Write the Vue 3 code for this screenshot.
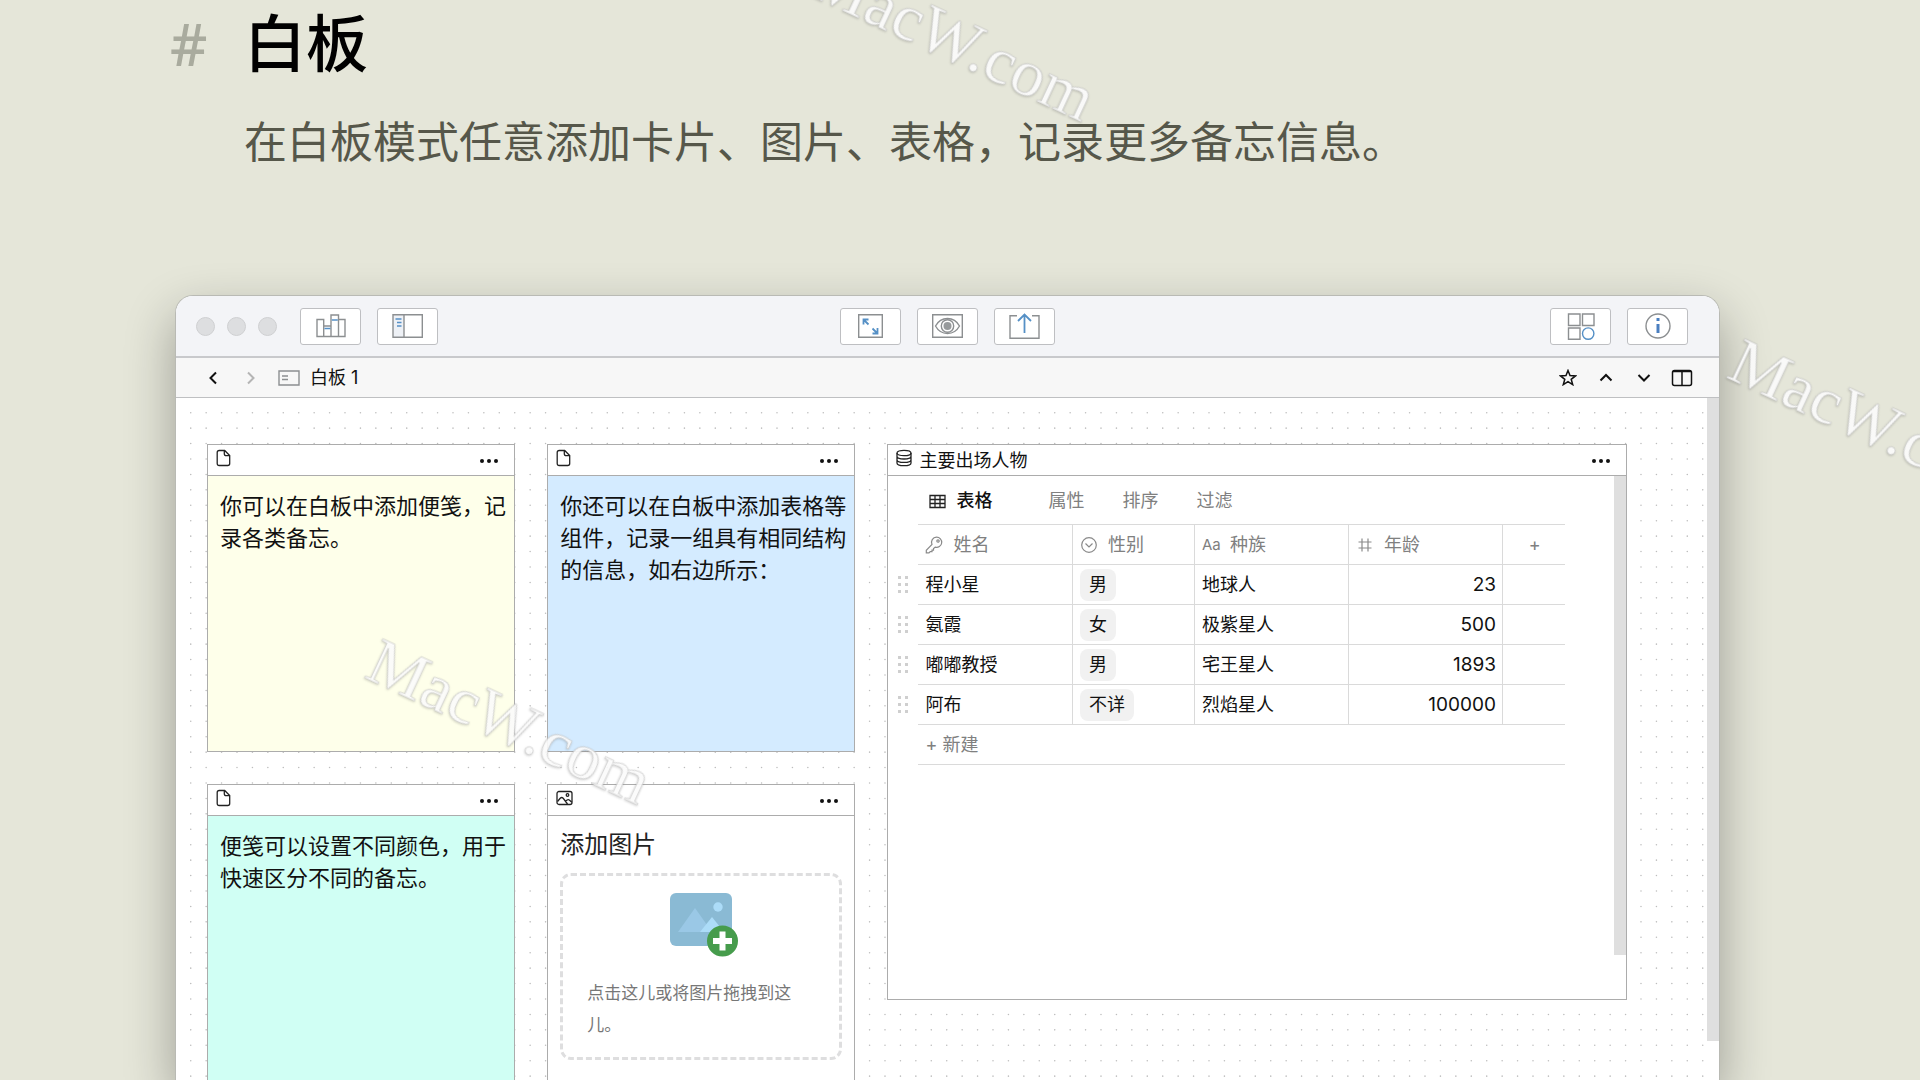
<script setup>
const notes = [
  { id: 'yellow', lines: '你可以在白板中添加便笺，记录各类备忘。' },
  { id: 'blue', lines: '你还可以在白板中添加表格等组件，记录一组具有相同结构的信息，如右边所示：' },
  { id: 'mint', lines: '便笺可以设置不同颜色，用于快速区分不同的备忘。' },
]

const rows = [
  { name: '程小星', gender: '男', race: '地球人', age: 23 },
  { name: '氨霞', gender: '女', race: '极紫星人', age: 500 },
  { name: '嘟嘟教授', gender: '男', race: '宅王星人', age: 1893 },
  { name: '阿布', gender: '不详', race: '烈焰星人', age: 100000 },
]

const watermarks = [
  { x: 807, y: -6 },
  { x: 363, y: 677 },
  { x: 1725, y: 377 },
]

const gridDots = Array.from({ length: 49 }, (_, i) => ({
  x: (i % 7) * 10 + 5,
  y: Math.floor(i / 7) * 10 + 5,
}))
</script>

<template>
  <main class="page">
    <header class="intro">
      <span class="hash" aria-hidden="true">#</span>
      <div>
        <h1>白板</h1>
        <p>在白板模式任意添加卡片、图片、表格，记录更多备忘信息。</p>
      </div>
    </header>

    <section class="window" aria-label="白板 1">
      <div class="toolbar">
        <div class="group">
          <span class="lights"><i></i><i></i><i></i></span>
          <button class="tool" aria-label="书架">
            <svg width="30" height="24" viewBox="0 0 30 24">
              <path class="g" d="M1 5.5h6.7v17H1zM7.700 12h7.300v10.500H7.700zM15 1h7.500v21.500H15zM22.500 5.500h6.500v17h-6.500z" />
              <path class="b" d="M8.500 14.500h6M15.800 6h6" />
            </svg>
          </button>
          <button class="tool" aria-label="侧栏">
            <svg width="31" height="24" viewBox="0 0 31 24">
              <path d="M1 1h11v22H1z" fill="#eef1f6" />
              <path class="g" d="M1 .7h29.300v22.600H1zM12 1v22" />
              <path class="b" d="M3.500 5h6M5 8.500h4.500M5 12h4.500" />
            </svg>
          </button>
        </div>
        <div class="group">
          <button class="tool" aria-label="全屏">
            <svg width="25" height="24" viewBox="0 0 25 24">
              <path class="g" d="M.7.700h23.600v22.600H.7z" />
              <path class="b thick" d="M5.500 10.500V5.500h5M6 6l4.500 4.500M19.500 14v5.500h-5M19 19l-4.500-4.500" />
            </svg>
          </button>
          <button class="tool" aria-label="预览">
            <svg width="31" height="24" viewBox="0 0 31 24">
              <path class="g" d="M.7.700h29.600v22.600H.7z" />
              <path class="g" d="M3.500 12C9 2 22 2 27.500 12 22 22 9 22 3.500 12z" />
              <circle class="g" cx="15.500" cy="12" r="6.200" />
              <circle cx="15.500" cy="12" r="4" fill="#979a9c" />
            </svg>
          </button>
          <button class="tool" aria-label="导出">
            <svg width="31" height="26" viewBox="0 0 31 26">
              <path class="g" d="M8 2.700H1v22.600h29V2.700h-7" />
              <path class="b thick" d="M15.500 20V1.500M9 8l6.500-6.500L22 8" />
            </svg>
          </button>
        </div>
        <div class="group end">
          <button class="tool" aria-label="组件">
            <svg width="28" height="27" viewBox="0 0 28 27">
              <path class="g" d="M1.500 1H13v11.500H1.500zM15.500 1H27v11.500H15.500zM1.500 15H13v11.300H1.500z" />
              <circle class="b" cx="21.200" cy="20.600" r="5.700" />
            </svg>
          </button>
          <button class="tool" aria-label="信息">
            <svg width="26" height="26" viewBox="0 0 26 26">
              <circle class="g" cx="13" cy="13" r="12" />
              <path d="M11.500 5h3v3h-3zM11.500 11h3v9h-3z" fill="#4a7fc0" />
            </svg>
          </button>
        </div>
      </div>

      <div class="tabbar">
        <button class="plain" aria-label="后退">
          <svg width="10" height="14" viewBox="0 0 10 14"><path d="M8 1.500L2.500 7 8 12.500" /></svg>
        </button>
        <button class="plain forward" aria-label="前进">
          <svg width="10" height="14" viewBox="0 0 10 14"><path d="M2 1.500L7.500 7 2 12.500" /></svg>
        </button>
        <svg width="22" height="16" viewBox="0 0 22 16">
          <path class="g" d="M1 1h20v14H1zM4 6h6M4 9.500h6" />
        </svg>
        <span class="doc-title">白板 1</span>
        <button class="plain" aria-label="收藏">
          <svg width="18" height="17" viewBox="0 0 18 17">
            <path class="thin" d="M9 1.500l2 5.100 5.500.3-4.300 3.400 1.500 5.300L9 12.600l-4.700 3 1.500-5.300L1.500 6.900 7 6.600z" />
          </svg>
        </button>
        <button class="plain" aria-label="上一个">
          <svg width="14" height="10" viewBox="0 0 14 10"><path d="M1.500 7.500L7 2l5.500 5.500" /></svg>
        </button>
        <button class="plain" aria-label="下一个">
          <svg width="14" height="10" viewBox="0 0 14 10"><path d="M1.500 2L7 7.500 12.500 2" /></svg>
        </button>
        <button class="plain" aria-label="分栏">
          <svg width="22" height="18" viewBox="0 0 22 18">
            <rect class="thin" x="1.500" y="1.500" width="19" height="15" rx="2" />
            <path class="thin" d="M2 2.500h18M11 2v14" />
          </svg>
        </button>
      </div>

      <div class="canvas">
        <div class="board">
          <svg class="dots" aria-hidden="true">
            <pattern id="dots" x="7" y="7" width="108" height="108" patternUnits="userSpaceOnUse" viewBox="0 0 70 70">
              <circle v-for="(d, i) in gridDots" :key="i" :cx="d.x" :cy="d.y" r=".5" />
            </pattern>
            <rect width="100%" height="100%" fill="url(#dots)" />
          </svg>

          <article v-for="note in notes" :key="note.id" class="card" :class="note.id">
            <header class="card-head">
              <svg class="ink" width="15" height="18" viewBox="0 0 15 18">
                <path d="M3.200 1.500h5.500l5 5v8c0 1.300-.7 2-2 2H3.200c-1.300 0-2-.7-2-2v-11c0-1.300.7-2 2-2zM8.300 1.500v3.200c0 1.200.7 1.900 1.900 1.900h3.300" />
              </svg>
              <button class="more" aria-label="更多"><i></i><i></i><i></i></button>
            </header>
            <p class="note">{{ note.lines }}</p>
          </article>

          <article class="card picture">
            <header class="card-head">
              <svg class="ink" width="17" height="18" viewBox="0 0 17 18">
                <rect x="1" y="2.500" width="15" height="13" rx="2" />
                <path d="M1.500 12.500l2.700-3.200c1-1 2-1 3 0L11.500 15M9.500 12.300l1.600-1.300c.8-.5 1.500-.5 2.200 0l2.500 2.300" />
                <circle cx="11.500" cy="6" r="1.300" />
              </svg>
              <button class="more" aria-label="更多"><i></i><i></i><i></i></button>
            </header>
            <h2>添加图片</h2>
            <button class="drop">
              <svg width="62" height="66" viewBox="0 0 62 66" overflow="visible">
                <rect x="0" y="0" width="62" height="53" rx="6" fill="#8abad4" />
                <path d="M8 39l17-24 17 24z" fill="#9ac8e6" />
                <path d="M30 39l12-15 12 15z" fill="#acdcf8" />
                <circle cx="48" cy="14" r="4.700" fill="#acdcf8" />
                <circle cx="52.500" cy="48" r="15.500" fill="#469c4c" />
                <path d="M49.500 38.500h6v6.500H62v6h-6.500v6.500h-6V51H43v-6h6.500z" fill="#fff" />
              </svg>
              <span>点击这儿或将图片拖拽到这儿。</span>
            </button>
          </article>

          <article class="card data">
            <header class="card-head">
              <svg class="ink" width="17" height="18" viewBox="0 0 17 18">
                <ellipse cx="8" cy="4" rx="7" ry="2.700" />
                <path d="M1 4v10c0 1.500 3 2.700 7 2.700s7-1.200 7-2.700V4M1 7.300c0 1.500 3 2.700 7 2.700s7-1.200 7-2.700M1 10.700c0 1.500 3 2.700 7 2.700s7-1.200 7-2.700" />
              </svg>
              <span class="card-title">主要出场人物</span>
              <button class="more" aria-label="更多"><i></i><i></i><i></i></button>
            </header>
            <div class="data-body">
              <div class="data-main">
                <nav class="tabs">
                  <button class="tab active">
                    <svg width="17" height="15" viewBox="0 0 17 15">
                      <path d="M1 1.500h15v12H1zM1 5.500h15M1 9.500h15M6 1.500v12M11 1.500v12" />
                    </svg>表格
                  </button>
                  <button class="tab">属性</button>
                  <button class="tab">排序</button>
                  <button class="tab">过滤</button>
                </nav>
                <table>
                  <colgroup>
                    <col class="c-grip" /><col class="c-wide" /><col class="c-mid" /><col class="c-wide" /><col class="c-wide" /><col class="c-add" />
                  </colgroup>
                  <thead>
                    <tr>
                      <td class="grip"></td>
                      <th><span class="field">
                        <svg width="18" height="18" viewBox="0 0 18 18">
                          <path d="M11.500 1.200a5.100 5.100 0 1 1-1.300 10L8.500 12.600v1.500H7v1.500H5.200L4 16.800H1.300v-2.500L7 8.500a5.100 5.100 0 0 1 4.500-7.300z" />
                          <circle cx="13" cy="5" r="1.200" />
                        </svg>姓名</span></th>
                      <th><span class="field">
                        <svg width="18" height="18" viewBox="0 0 18 18">
                          <circle cx="9" cy="9" r="7.300" /><path d="M5.500 7.500L9 11l3.500-3.500" />
                        </svg>性别</span></th>
                      <th><span class="field"><small>Aa</small>种族</span></th>
                      <th><span class="field">
                        <svg width="18" height="18" viewBox="0 0 18 18">
                          <path d="M2.500 6h13M2.500 12h13M6 2.500v13M12 2.500v13" />
                        </svg>年龄</span></th>
                      <th class="add"><button class="link" aria-label="添加属性">+</button></th>
                    </tr>
                  </thead>
                  <tbody>
                    <tr v-for="row in rows" :key="row.name">
                      <td class="grip">
                        <svg width="10" height="17" viewBox="0 0 10 17" aria-hidden="true">
                          <path d="M0 0h3v3H0zM7 0h3v3H7zM0 7h3v3H0zM7 7h3v3H7zM0 14h3v3H0zM7 14h3v3H7z" fill="#cfcfcf" />
                        </svg>
                      </td>
                      <td>{{ row.name }}</td>
                      <td><span class="tag">{{ row.gender }}</span></td>
                      <td>{{ row.race }}</td>
                      <td class="num">{{ row.age }}</td>
                      <td class="add"></td>
                    </tr>
                    <tr>
                      <td class="grip"></td>
                      <td class="add" colspan="5"><button class="link">+ 新建</button></td>
                    </tr>
                  </tbody>
                </table>
              </div>
              <div class="thumb"></div>
            </div>
          </article>
        </div>
        <div class="thumb"></div>
      </div>
    </section>

    <svg class="marks" aria-hidden="true">
      <text v-for="m in watermarks" :key="m.x" :transform="`translate(${m.x} ${m.y}) rotate(25)`">MacW.com</text>
    </svg>
  </main>
</template>

<style>
body {
  background: #e5e6d9;
}
</style>

<style scoped>
* {
  box-sizing: border-box;
}

.page {
  position: relative;
  display: flex;
  flex-direction: column;
  height: 100vh;
  overflow: hidden;
  background: #e5e6d9;
  color: #111;
  font: 18px/28px Inter, 'Noto Sans CJK SC', sans-serif;
}

button {
  margin: 0;
  padding: 0;
  border: 0;
  background: none;
  color: inherit;
  font: inherit;
}

svg {
  display: block;
  flex: none;
  fill: none;
}

.intro {
  display: grid;
  grid-template-columns: 74px 1fr;
  padding-left: 170px;
}

.hash {
  color: #a9ab9e;
  font: 500 58px/88px 'Noto Sans', sans-serif;
}

h1 {
  margin: 0;
  color: #000;
  font-size: 62px;
  font-weight: 500;
  line-height: 90px;
}

.intro p {
  margin: 22px 0 0;
  color: #56574a;
  font-size: 43px;
  line-height: 60px;
}

.window {
  display: flex;
  flex: 1;
  flex-direction: column;
  min-height: 0;
  margin: 123px 200px 0 175px;
  border: 1px solid #b9bab4;
  border-bottom: 0;
  border-radius: 18px 18px 0 0;
  background: #fff;
  box-shadow: 0 20px 50px rgba(0, 0, 0, 0.32);
  overflow: hidden;
}

.toolbar {
  display: grid;
  grid-template-columns: 1fr auto 1fr;
  align-items: center;
  height: 62px;
  flex: none;
  padding: 0 20px;
  border-bottom: 2px solid #c8c9cc;
  background: #f3f4f7;
}

.group {
  display: flex;
  align-items: center;
  gap: 16px;
}

.end {
  justify-content: flex-end;
  padding-right: 11px;
}

.lights {
  display: flex;
  gap: 12px;
  margin-right: 7px;
}

.lights i {
  width: 19px;
  height: 19px;
  border: 1px solid #cfd0d2;
  border-radius: 50%;
  background: #dddee0;
}

.tool {
  display: flex;
  align-items: center;
  justify-content: center;
  width: 61px;
  height: 37px;
  border: 1px solid #bebfc2;
  border-radius: 3px;
  background: #fff;
}

.g {
  stroke: #8c8f91;
  stroke-width: 1.4;
}

.b {
  stroke: #5590c6;
  stroke-width: 1.4;
}

.thick {
  stroke-width: 1.8;
}

.tabbar {
  display: flex;
  align-items: center;
  flex: none;
  gap: 16px;
  height: 40px;
  padding: 0 26px;
  border-bottom: 1px solid #bfc0c2;
  background: #f7f7f7;
}

.plain {
  display: flex;
  justify-content: center;
  width: 22px;
}

.plain svg {
  stroke: #111;
  stroke-width: 2;
}

.plain .thin {
  stroke-width: 1.5;
}

.forward svg {
  stroke: #b5b5b5;
}

.doc-title {
  flex: 1;
  margin-left: -6px;
}

.canvas {
  display: flex;
  flex: 1;
  min-height: 0;
}

.board {
  position: relative;
  display: grid;
  flex: 1;
  grid-template-columns: 308fr 308fr 739fr;
  grid-auto-rows: 308px;
  gap: 32px;
  min-width: 0;
  padding: 46px 80px 0 31px;
  overflow: hidden;
}

.dots {
  position: absolute;
  inset: 0;
  width: 100%;
  height: 100%;
}

.dots circle {
  fill: #bdbdbd;
}

.thumb {
  flex: none;
  width: 12px;
  height: 643px;
  background: #dfdfdf;
}

.card {
  position: relative;
  display: flex;
  flex-direction: column;
  min-width: 0;
  border: 1px solid #acacac;
  background: #fff;
}

.yellow { background: #feffea; }
.blue { background: #d4ebff; }
.mint { grid-row: 2; background: #d0fff4; }
.picture { grid-row: 2; grid-column: 2; }

.data {
  grid-row: 1 / 3;
  grid-column: 3;
  height: 556px;
}

.card-head {
  display: flex;
  align-items: center;
  height: 31px;
  flex: none;
  padding: 2px 16px 0 8px;
  border-bottom: 1px solid #acacac;
  background: #fff;
}

.ink {
  margin-bottom: 6px;
  stroke: #222;
  stroke-width: 1.3;
}

.card-title {
  margin-left: 6px;
}

.more {
  display: flex;
  gap: 3px;
  margin-left: auto;
}

.more i {
  width: 4px;
  height: 4px;
  border-radius: 50%;
  background: #111;
}

.note {
  margin: 0;
  padding: 14px 4px 0 12px;
  font-size: 22px;
  line-height: 32px;
}

h2 {
  margin: 0;
  padding: 13px 12px 12px;
  color: #222;
  font-size: 24px;
  font-weight: 400;
  line-height: 32px;
}

.drop {
  display: flex;
  flex-direction: column;
  align-items: center;
  gap: 18px;
  height: 187px;
  margin: 0 12px;
  padding: 17px 24px 0;
  border: 3px dashed #dededf;
  border-radius: 11px;
  color: #777;
  font-size: 17px;
  line-height: 32px;
  text-align: left;
}

.data-body {
  display: flex;
  flex: 1;
  min-height: 0;
}

.data-main {
  flex: 1;
}

.data-body .thumb {
  height: 479px;
}

.tabs {
  display: flex;
  gap: 38px;
  height: 48px;
  padding: 2px 0 0 41px;
}

.tab {
  display: flex;
  align-items: center;
  gap: 10px;
  color: #808080;
}

.tab.active {
  margin-right: 18px;
  color: #111;
  font-weight: 500;
}

.tab svg {
  stroke: #222;
  stroke-width: 1.3;
}

table {
  width: 677px;
  border-collapse: collapse;
  table-layout: fixed;
}

.c-grip { width: 30px; }
.c-wide { width: 154px; }
.c-mid { width: 122px; }
.c-add { width: 63px; }

th,
td {
  height: 40px;
  padding: 0 6px 0 7px;
  border: 1px solid #dadada;
  border-left: 0;
  font-weight: 400;
  text-align: left;
}

th {
  color: #808080;
}

.grip {
  padding: 0 0 0 10px;
  border: 0;
}

.add {
  border-right: 0;
}

th.add {
  text-align: center;
}

.num {
  font-size: 19px;
  text-align: right;
}

.field {
  display: flex;
  align-items: center;
  gap: 10px;
}

.field svg {
  stroke: #8a8a8a;
  stroke-width: 1.2;
}

.field small {
  width: 18px;
  font-size: 15px;
}

.tag {
  display: inline-block;
  padding: 2px 9px;
  border-radius: 8px;
  background: #f1f1f1;
}

.link {
  color: #808080;
}

.marks {
  position: absolute;
  inset: 0;
  width: 100%;
  height: 100%;
  pointer-events: none;
}

.marks text {
  fill: #fff;
  fill-opacity: 0.9;
  stroke: #c4c4c4;
  stroke-opacity: 0.6;
  stroke-width: 1;
  font: 66px 'Liberation Serif', serif;
  filter: drop-shadow(0 1px 1px rgba(0, 0, 0, 0.2));
}
</style>
